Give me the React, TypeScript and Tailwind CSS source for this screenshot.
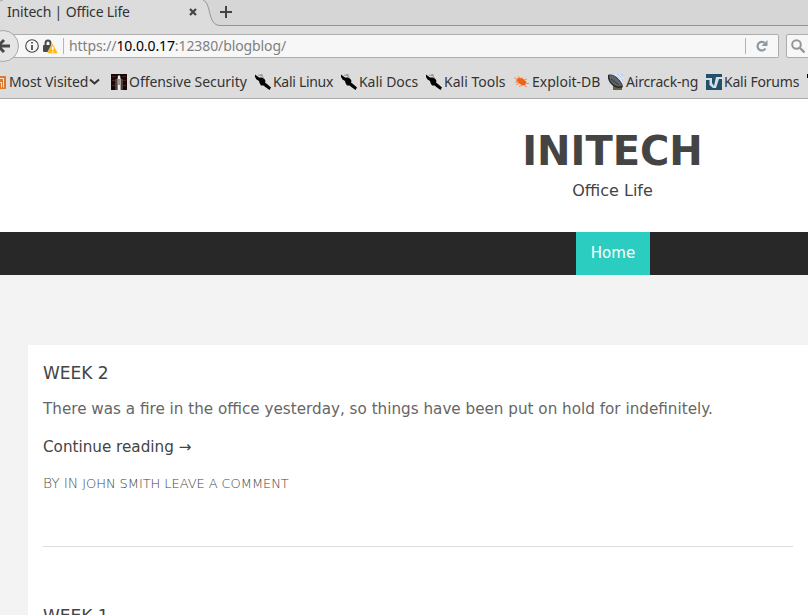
import type { ReactNode } from 'react';

const uiFont = "font-['Noto_Sans','Open_Sans',sans-serif]";

function DragonIcon() {
  return (
    <svg width="16" height="16" viewBox="0 0 16 16">
      <path d="M0 .5l2 1.500 2 1.500h3l2.500 1.500 1 2-.5 1.500 2 1.500 4 3.500-1.500 2.500-3.500-2.500-2.500-2L6 11.500 4.500 9 4 7 1.500 5.500 0 3z" fill="#050505" />
      <path d="M3 1l4 .8 1.500 2M5 0l3 1.200" stroke="#666" strokeWidth=".6" fill="none" />
    </svg>
  );
}

function OffsecIcon() {
  return (
    <svg width="16" height="16" viewBox="0 0 16 16">
      <path d="M0 0h16v16H0z" fill="#180808" />
      <path d="M1 2.500h4M1 6.500h3M11 2.500h4M12 6.500h3M1 11.500h3M12 11.500h3" stroke="#4d2020" />
      <path d="M7 1.500h2l.7 3.500v11H6.500V5z" fill="#ece8e4" />
      <path d="M8 5v6" stroke="#222" strokeWidth=".8" />
      <path d="M5 5v11M11 5v11" stroke="#998d86" strokeWidth=".8" />
    </svg>
  );
}

function BugIcon() {
  return (
    <svg width="16" height="16" viewBox="0 0 16 16">
      <path d="M2.500 5l3-1.500 4 1.500 3 3-1 3-3 .5-4-2.500-2-2z" fill="#ee6414" />
      <path d="M0 3.500l4 2M4 2l2 2.500M8 3l0 2M10 6l3-1M1 8l4 0M2 10.500l4-1M5 12.500l3-1M11 9.500h4M10 11.500l3 1.500" stroke="#f28a4c" strokeWidth=".9" />
    </svg>
  );
}

function DishIcon() {
  return (
    <svg width="16" height="16" viewBox="0 0 16 16">
      <path d="M5 0h10v10C13 5 10 2 5 0z" fill="#b9cdf0" />
      <path d="M7 0c4 2 6.500 5 7.500 9M11 0c2 1 3 3 4 5" stroke="#f5f8ff" fill="none" />
      <path d="M5 11l4 1h5v4H5z" fill="#6b6040" />
      <path d="M.5 1C6 0 13 6 14.500 12.500 9 15 0 10 .5 1z" fill="#5e6468" />
      <path d="M.5 1C0 10 9 15 14.500 12.500" stroke="#25282a" strokeWidth="1.400" fill="none" />
      <path d="M.5 1C6 0 13 6 14.500 12.500M3 5l8 6" stroke="#33383b" fill="none" />
    </svg>
  );
}

function ForumIcon() {
  return (
    <svg width="16" height="16" viewBox="0 0 16 16">
      <path d="M0 0h16v16H0z" fill="#23506b" />
      <path d="M0 4h6v5l2 3 2-9h6v2h-3l-3 9H7L3.500 11V6H0z" fill="#d3e0e6" />
    </svg>
  );
}

function Bookmark({ width, tracking, icon, label }: { width: string; tracking: string; icon: ReactNode; label: string }) {
  return (
    <div className={`flex shrink-0 items-center gap-0.5 ${width}`}>
      <span className="w-4 shrink-0">{icon}</span>
      <span className={tracking}>{label}</span>
    </div>
  );
}

function TabStrip() {
  return (
    <div className="relative flex h-[27px] border-b border-[#e8e8e8] bg-[#d6d6d6]">
      <svg className="absolute left-0 top-0" width="808" height="27">
        <path d="M0 0H203C211 3 208 25 220 25.5H808V27H0z" fill="#dcdcdc" />
        <path d="M203 0C212 4 207 25 220 25.5H808" stroke="#8e949a" fill="none" />
        <path d="M0 1L3 0" stroke="#aaa" />
      </svg>
      <div className="relative flex h-6 items-center pl-[7px]">
        <span className="w-[182px] pb-0.5 text-[14px] tracking-[-0.17px]">Initech | Office Life</span>
        <svg width="8" height="8" viewBox="0 0 8 8"><path d="M1 1l6 6M7 1L1 7" stroke="#444" strokeWidth="2.2" /></svg>
        <svg className="ml-[23px]" width="12" height="12" viewBox="0 0 12 12"><path d="M6 0v12M0 6h12" stroke="#444" strokeWidth="2" /></svg>
      </div>
    </div>
  );
}

function AddressBar() {
  return (
    <div className="flex h-[38px] items-center">
      <div className="relative flex h-6 w-[779px] shrink-0 items-center rounded-r-[2px] border border-l-0 border-[#acacac] bg-[#f7f7f7]">
        <svg className="absolute -top-[5px] left-0" width="20" height="32" viewBox="0 0 20 32">
          <circle cx="3" cy="16" r="15.5" fill="#e5e5e5" stroke="#a7a7a7" />
          <path d="M10 16H0M4 10l-6 6 6 6" stroke="#484848" strokeWidth="3" fill="none" />
        </svg>
        <svg className="ml-[25px]" width="14" height="14" viewBox="0 0 14 14">
          <circle cx="7" cy="7" r="6.3" fill="none" stroke="#444" strokeWidth="1.1" />
          <path d="M7 6v5M7 3v1.6" stroke="#444" strokeWidth="1.7" />
        </svg>
        <svg className="ml-1" width="15" height="15" viewBox="0 0 15 15">
          <path d="M2.500 7V4.500a2.500 3 0 0 1 5 0V7" stroke="#4a4a4a" strokeWidth="2" fill="none" />
          <rect x="0" y="6" width="10" height="7" rx="1" fill="#4a4a4a" />
          <path d="M9.500 4L15 14.500H4z" fill="#fdb813" stroke="#f7f7f7" strokeWidth=".5" />
          <path d="M9.700 7.500v3.500M9.700 12v1.500" stroke="#fff" strokeWidth="1.5" />
        </svg>
        <span className="ml-[5px] h-4 w-px bg-[#b5b5b5]" />
        <span className="ml-[5px] flex-1 whitespace-nowrap pb-0.5 text-[14px] tracking-[-0.1px] text-[#808080]">
          https://<span className="text-black">10.0.0.17</span>:12380/blogblog/
        </span>
        <span className="h-4 w-px bg-[#aeb2b5]" />
        <svg className="ml-[10px] mr-[10px]" width="12" height="12" viewBox="0 0 12 12">
          <path d="M8.500 2.800A4.300 4.300 0 1 0 9.500 8.500" stroke="#8b98a5" strokeWidth="2.200" fill="none" />
          <path d="M11.500 0v6h-6z" fill="#8b98a5" />
        </svg>
      </div>
      <div className="ml-[7px] flex h-6 w-10 shrink-0 items-center rounded-l-[2px] border border-[#acacac] bg-[#f7f7f7] pl-1">
        <svg className="shrink-0" width="14" height="14" viewBox="0 0 14 14">
          <circle cx="5.500" cy="5.500" r="4.300" fill="none" stroke="#969696" strokeWidth="2" />
          <path d="M8.500 8.500l5 5" stroke="#969696" strokeWidth="2.400" />
        </svg>
      </div>
    </div>
  );
}

function BookmarksBar() {
  return (
    <div className="flex h-[34px] items-center whitespace-nowrap border-b border-[#ababab] text-[14px]">
      <svg className="mt-0.5 shrink-0" width="6" height="13" viewBox="0 0 6 13">
        <path d="M0 0h6v13H0z" fill="#dc7b2e" />
        <path d="M0 2.500h3.500v9M0 6.500h1.500v5" stroke="#f9e3cd" fill="none" />
      </svg>
      <span className="ml-[3px] w-[80px] shrink-0 tracking-[-0.1px]">Most Visited</span>
      <svg className="mr-[11px] shrink-0" width="11" height="8" viewBox="0 0 11 8">
        <path d="M1 1.500l4.500 4 4.500-4" stroke="#333" strokeWidth="2" fill="none" />
      </svg>
      <Bookmark width="w-[144px]" tracking="tracking-[-0.05px]" icon={<OffsecIcon />} label="Offensive Security" />
      <Bookmark width="w-[86px]" tracking="tracking-[-0.3px]" icon={<DragonIcon />} label="Kali Linux" />
      <Bookmark width="w-[85px]" tracking="tracking-[-0.05px]" icon={<DragonIcon />} label="Kali Docs" />
      <Bookmark width="w-[88px]" tracking="tracking-[0px]" icon={<DragonIcon />} label="Kali Tools" />
      <Bookmark width="w-[94px]" tracking="tracking-[0px]" icon={<BugIcon />} label="Exploit-DB" />
      <Bookmark width="w-[98px]" tracking="tracking-[-0.17px]" icon={<DishIcon />} label="Aircrack-ng" />
      <Bookmark width="w-[101px]" tracking="tracking-[-0.2px]" icon={<ForumIcon />} label="Kali Forums" />
      <span className="mb-3 h-1 w-1 shrink-0 bg-black" />
    </div>
  );
}

export default function App() {
  return (
    <div className="h-[615px] w-[808px] overflow-hidden bg-[#f3f3f3] font-['DejaVu_Sans',sans-serif] text-[15px] text-[#444]">
      <div className={`h-[99px] overflow-hidden bg-[#dcdcdc] text-[#333] ${uiFont}`}>
        <TabStrip />
        <AddressBar />
        <BookmarksBar />
      </div>
      <header className="h-[133px] bg-white">
        <div className="flex w-[1225px] flex-col items-center pt-[31px]">
          <h1 className="text-[40px] font-bold leading-[42px]">INITECH</h1>
          <p className="mt-2 text-[16px] leading-[22px]">Office Life</p>
        </div>
      </header>
      <nav className="flex h-[43px] bg-[#282828] pl-[576px]">
        <a className="flex w-[74px] items-center justify-center bg-[#2bcdc1] text-white">Home</a>
      </nav>
      <main className="ml-7 mt-[70px] h-[270px] bg-white px-[15px] pt-[17px]">
        <article className="h-[185px] border-b border-[#ddd]">
          <h2 className="text-[17px] leading-[22px]">WEEK 2</h2>
          <p className="mt-[14px] whitespace-nowrap text-[15.2px] leading-[22px] text-[#666]">There was a fire in the office yesterday, so things have been put on hold for indefinitely.</p>
          <a className="mt-4 block text-[15.2px] leading-[22px]">Continue reading →</a>
          <p className="mt-[14px] text-[13px] font-extralight leading-[22px] text-[#444]"><span className="text-[14px] tracking-[-0.2px] text-[#555]">BY IN </span><span className="tracking-[-0.07px]">JOHN SMITH LEAVE A COMMENT</span></p>
        </article>
        <h2 className="mt-[58px] text-[17px] leading-[22px]">WEEK 1</h2>
      </main>
    </div>
  );
}
